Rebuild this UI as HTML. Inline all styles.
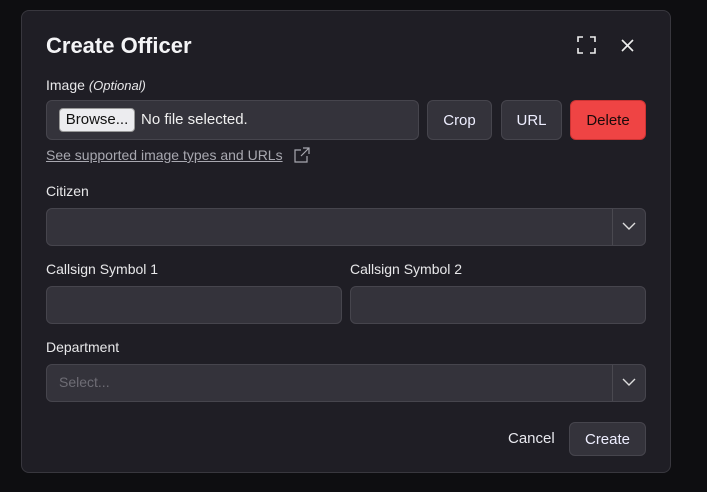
<!DOCTYPE html>
<html><head><style>
*{box-sizing:border-box;margin:0;padding:0}
body{width:707px;height:492px;background:#0e0e11;font-family:"Liberation Sans",sans-serif;color:#e5e5e7;position:relative;overflow:hidden}
.modal{position:absolute;left:21px;top:10px;width:650px;height:463px;background:#1f1e25;border:1px solid #38373e;border-radius:8px}
.a{position:absolute}
.lbl{font-size:14px;color:#e8e8ea}
.inp{background:#34333b;border:1px solid #46454d;border-radius:6px}
.btn{background:#34333b;border:1px solid #46454d;border-radius:6px;font-size:15px;color:#eef;display:flex;align-items:center;justify-content:center}
</style></head><body>
<div class="modal"></div>
<div class="a" style="left:46px;top:33px;font-size:22px;font-weight:bold;color:#f4f4f6">Create Officer</div>
<svg class="a" style="left:577px;top:36px" width="19" height="18" fill="none" stroke="#eee" stroke-width="1.6"><path d="M1 6V1h5M13 1h5v5M18 12v5h-5M6 17H1v-5"/></svg>
<svg class="a" style="left:621px;top:39px" width="13" height="13" stroke="#eee" stroke-width="1.6"><path d="M1 1l11 11M12 1L1 12"/></svg>
<div class="a lbl" style="left:46px;top:77px">Image <i style="font-size:13px">(Optional)</i></div>
<div class="a inp" style="left:46px;top:100px;width:373px;height:40px"></div>
<div class="a" style="left:59px;top:108px;width:76px;height:24px;background:#ececef;border:1px solid #999;border-radius:4px;color:#111;font-size:15px;text-align:center;line-height:22px">Browse...</div>
<div class="a" style="left:141px;top:111px;font-size:15px;color:#f0f0f0">No file selected.</div>
<div class="a btn" style="left:427px;top:100px;width:65px;height:40px">Crop</div>
<div class="a btn" style="left:501px;top:100px;width:61px;height:40px">URL</div>
<div class="a btn" style="left:570px;top:100px;width:76px;height:40px;background:#ef4444;border-color:#c33;color:#1a0a0a">Delete</div>
<div class="a" style="left:46px;top:147px;font-size:14px;color:#a8a8b0;text-decoration:underline">See supported image types and URLs</div>
<svg class="a" style="left:294px;top:147px" width="17" height="16" fill="none" stroke="#a8a8b0" stroke-width="1.2"><path d="M7 3H1v12h12V9M9 1h6v6M15 1L7 9"/></svg>
<div class="a lbl" style="left:46px;top:183px">Citizen</div>
<div class="a inp" style="left:46px;top:208px;width:600px;height:38px"></div>
<div class="a" style="left:612px;top:209px;width:1px;height:36px;background:#4a4950"></div>
<svg class="a" style="left:622px;top:222px" width="14" height="9" fill="none" stroke="#ddd" stroke-width="1.4"><path d="M1 1l6 6 6-6"/></svg>
<div class="a lbl" style="left:46px;top:261px">Callsign Symbol 1</div>
<div class="a lbl" style="left:350px;top:261px">Callsign Symbol 2</div>
<div class="a inp" style="left:46px;top:286px;width:296px;height:38px"></div>
<div class="a inp" style="left:350px;top:286px;width:296px;height:38px"></div>
<div class="a lbl" style="left:46px;top:339px">Department</div>
<div class="a inp" style="left:46px;top:364px;width:600px;height:38px"></div>
<div class="a" style="left:59px;top:374px;font-size:14px;color:#6e6d75">Select...</div>
<div class="a" style="left:612px;top:365px;width:1px;height:36px;background:#4a4950"></div>
<svg class="a" style="left:622px;top:378px" width="14" height="9" fill="none" stroke="#ddd" stroke-width="1.4"><path d="M1 1l6 6 6-6"/></svg>
<div class="a" style="left:508px;top:430px;font-size:15px;color:#e8e8ee">Cancel</div>
<div class="a btn" style="left:569px;top:422px;width:77px;height:34px">Create</div>
</body></html>
